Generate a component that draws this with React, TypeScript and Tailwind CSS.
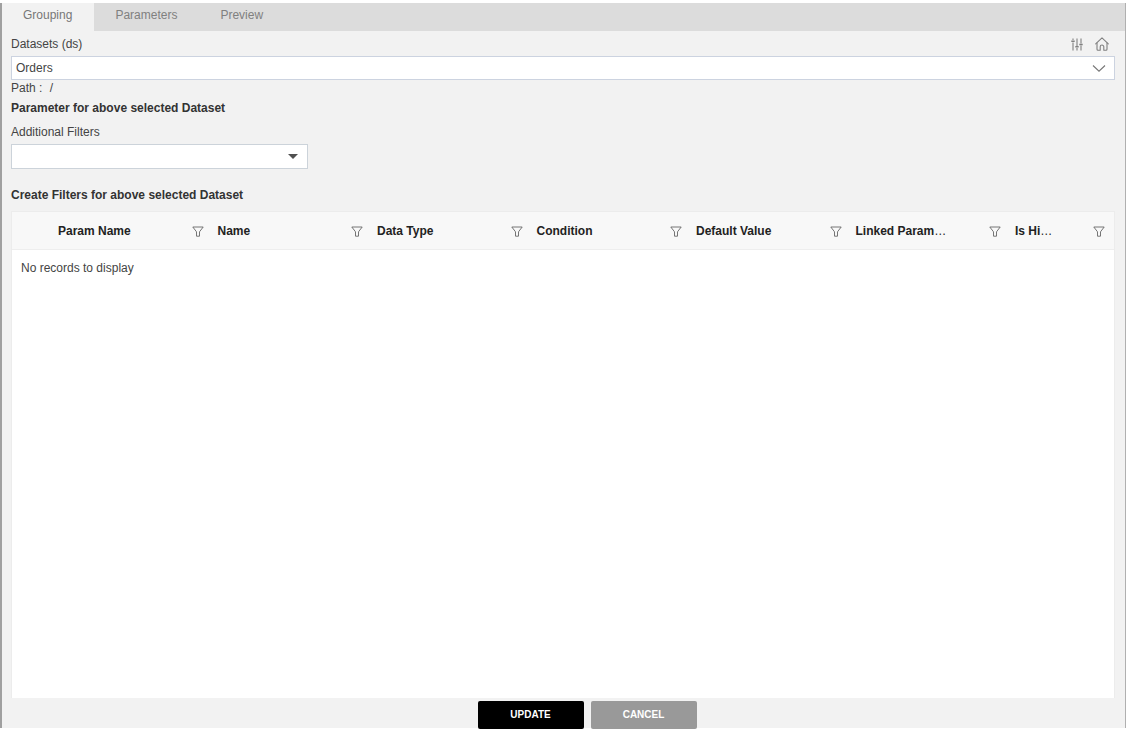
import { useState } from "react";

const tabs = ["Grouping", "Parameters", "Preview"];

const columns = [
  { name: "Param Name" },
  { name: "Name" },
  { name: "Data Type" },
  { name: "Condition" },
  { name: "Default Value" },
  { name: "Linked Param", more: true },
  { name: "Is Hi", more: true },
];

function SlidersIcon() {
  return (
    <svg width="12" height="13" viewBox="0 0 12 13" fill="none" stroke="#808080" strokeWidth="1.1">
      <path d="M2 0.5V2M2 4.5V12.5M6 0.5V8M6 10V12.5M10 0.5V5.5M10 7.5V12.5" />
      <path d="M0.3 3.3H3.7M4.3 8.8H7.7M8.3 6.4H11.7" strokeWidth="1.5" />
    </svg>
  );
}

function HomeIcon() {
  return (
    <svg width="14" height="14" viewBox="0 0 14 14" fill="none" stroke="#808080" strokeWidth="1.1" strokeLinejoin="round" strokeLinecap="round">
      <path d="M0.7 6.8L7 0.9L13.3 6.8" />
      <path d="M2 6V12.2Q2 13.2 3 13.2H5.2V9.8A1.8 1.8 0 0 1 8.8 9.8V13.2H11Q12 13.2 12 12.2V6" />
    </svg>
  );
}

function FilterIcon() {
  return (
    <svg width="12" height="11" viewBox="0 0 12 11" fill="none" stroke="#666666" strokeWidth="0.9" strokeLinejoin="round">
      <path d="M0.8 1H11.2L7.5 5.8V10.2H4.5V5.8Z" />
    </svg>
  );
}

export default function App() {
  const [active, setActive] = useState("Grouping");

  return (
    <div className="min-h-screen flex flex-col bg-white pt-[3px] font-['Liberation_Sans',Arial,sans-serif] text-xs leading-4 text-[#444444]">
      <div className="flex-1 flex flex-col bg-[#f2f2f2] border-l-2 border-r border-l-[#a0a0a0] border-r-[#b0b0b0] mb-[3px]">
        <nav className="flex h-7 bg-[#dcdcdc] text-[#808080]" role="tablist">
          {tabs.map((tab) => (
            <button
              key={tab}
              role="tab"
              aria-selected={active === tab}
              onClick={() => setActive(tab)}
              className={
                active === tab
                  ? "pl-[21px] pr-[22px] pb-1 bg-[#f2f2f2] text-[#777777]"
                  : "pl-[21px] pr-[22px] pb-1"
              }
            >
              {tab}
            </button>
          ))}
        </nav>

        <main className="flex-1 flex flex-col pl-[9px] pr-[10px]">
          <div className="flex items-center justify-between pt-[5px] pb-1">
            <label htmlFor="dataset">Datasets (ds)</label>
            <div className="flex items-center gap-3 pr-[6px]">
              <button aria-label="Settings">
                <SlidersIcon />
              </button>
              <button aria-label="Home">
                <HomeIcon />
              </button>
            </div>
          </div>

          <div className="relative">
            <select
              id="dataset"
              className="block w-full h-6 appearance-none border border-[#ccd3e0] bg-white px-1 text-[#444444]"
            >
              <option>Orders</option>
            </select>
            <svg className="absolute right-[9px] top-2 pointer-events-none" width="14" height="9" viewBox="0 0 14 9" fill="none" stroke="#777777" strokeWidth="1.1">
              <path d="M1 1.5L7 7.2L13 1.5" />
            </svg>
          </div>
          <p>
            Path : <span className="ml-1">/</span>
          </p>

          <h2 className="pt-1 font-bold text-[#333333]">Parameter for above selected Dataset</h2>

          <label htmlFor="filters" className="pt-2 pb-1">
            Additional Filters
          </label>
          <div className="relative w-[297px]">
            <select
              id="filters"
              className="block w-full h-[25px] appearance-none border border-[#ccd3da] bg-white px-1"
            >
              <option></option>
            </select>
            <svg className="absolute right-[10px] top-[10px] pointer-events-none" width="10" height="5" viewBox="0 0 10 5" fill="#505050">
              <path d="M0 0H10L5 5Z" />
            </svg>
          </div>

          <h2 className="pt-[18px] pb-2 font-bold text-[#333333]">Create Filters for above selected Dataset</h2>

          <div className="flex-1 bg-white border-x border-t border-[#ececec]">
            <table className="w-full table-fixed border-collapse text-left">
              <colgroup>
                <col className="w-9" />
                {columns.slice(0, -1).map((col) => (
                  <col key={col.name} />
                ))}
                <col className="w-[109px]" />
              </colgroup>
              <thead>
                <tr className="h-[37px] bg-[#f8f8f8] border-b border-[#eeeeee] text-[#222222]">
                  <th></th>
                  {columns.map((col) => (
                    <th key={col.name} className="pl-[10px] pr-1 pt-px last:pr-[9px] font-bold">
                      <div className="flex items-center justify-between">
                        <span className="whitespace-nowrap">
                          {col.name}
                          {col.more && <span className="font-normal">…</span>}
                        </span>
                        <button aria-label={"Filter " + col.name} className="shrink-0 pt-px">
                          <FilterIcon />
                        </button>
                      </div>
                    </th>
                  ))}
                </tr>
              </thead>
              <tbody>
                <tr>
                  <td colSpan={8} className="h-[38px] px-[9px]">
                    No records to display
                  </td>
                </tr>
              </tbody>
            </table>
          </div>

          <div className="flex justify-center gap-[7px] pt-[3px] -mb-px pl-12 text-[10px] font-bold text-white">
            <button className="w-[106px] h-7 rounded-xs bg-black">UPDATE</button>
            <button className="w-[106px] h-7 rounded-xs bg-[#999999]">CANCEL</button>
          </div>
        </main>
      </div>
    </div>
  );
}
